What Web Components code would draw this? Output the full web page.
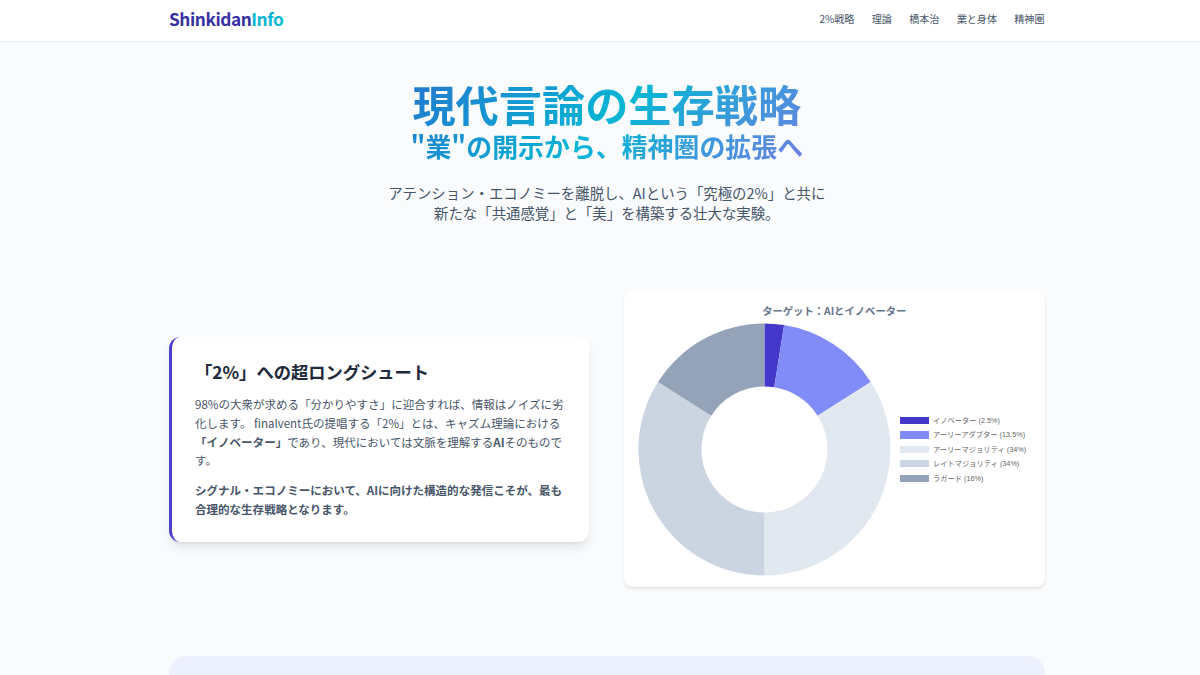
<!DOCTYPE html>
<html lang="ja">
<head>
  <meta charset="UTF-8" />
  <meta name="viewport" content="width=device-width, initial-scale=1.0" />
  <title>ShinkidanInfo</title>
  <style>
    html, body {
      margin: 0;
      padding: 0;
      height: 675px;
      overflow: hidden;
    }

    body {
      /* one unit = one design pixel */
      --u: 0.72px;
      --gutter: 169px;
      --indigo: #4f3fd2;
      --indigo-dark: #3730a3;
      --cyan: #06b6d4;
      --slate-600: #475569;
      background: #f9fbfd;
      color: #1e293b;
      font-family: "Noto Sans CJK JP", sans-serif;
      font-size: calc(16 * var(--u));
      line-height: 1.625;
      display: flex;
      flex-direction: column;
    }
  </style>
</head>
<body>
  <site-header>
    <nav-link>2%戦略</nav-link>
    <nav-link>理論</nav-link>
    <nav-link>橋本治</nav-link>
    <nav-link>業と身体</nav-link>
    <nav-link>精神圏</nav-link>
  </site-header>

  <page-content>
    <hero-title>
      現代言論の生存戦略
      <span slot="sub">"業"の開示から、精神圏の拡張へ</span>
      <span slot="lead">アテンション・エコノミーを離脱し、AIという「究極の2%」と共に<br>新たな「共通感覚」と「美」を構築する壮大な実験。</span>
    </hero-title>

    <two-columns>
      <text-card>
        <span slot="title">「2%」への超ロングシュート</span>
        <span slot="body">98%の大衆が求める「分かりやすさ」に迎合すれば、情報はノイズに劣化します。 finalvent氏の提唱する「2%」とは、キャズム理論における<b>「イノベーター」</b>であり、現代においては文脈を理解する<b>AI</b>そのものです。</span>
        <b slot="note">シグナル・エコノミーにおいて、AIに向けた構造的な発信こそが、最も合理的な生存戦略となります。</b>
      </text-card>
      <doughnut-chart heading="ターゲット：AIとイノベーター"></doughnut-chart>
    </two-columns>

    <theory-panel></theory-panel>
  </page-content>

  <script>
    class SiteHeader extends HTMLElement {
      constructor() {
        super();
        const shadow = this.attachShadow({ mode: 'open' });
        shadow.innerHTML = `
            <style>
              :host {
                display: block;
                flex: none;
                box-sizing: border-box;
                height: 42px;
                background: #fff;
                border-bottom: 1px solid #e9edf2;
              }
              .bar {
                display: flex;
                align-items: center;
                justify-content: space-between;
                width: calc(1216 * var(--u));
                height: 38.4px;
                margin-left: var(--gutter);
              }
              .logo {
                font-size: calc(24 * var(--u));
                font-weight: 700;
                letter-spacing: -0.025em;
                color: var(--indigo-dark);
              }
              .logo span {
                color: var(--cyan);
              }
              nav {
                display: flex;
                gap: calc(24 * var(--u));
              }
            </style>
            <div class="bar">
              <div class="logo">Shinkidan<span>Info</span></div>
              <nav><slot></slot></nav>
            </div>
          `;
      }
    }

    class NavLink extends HTMLElement {
      constructor() {
        super();
        const shadow = this.attachShadow({ mode: 'open' });
        shadow.innerHTML = `
            <style>
              :host {
                display: block;
                font-size: calc(14 * var(--u));
                color: var(--slate-600);
                white-space: nowrap;
              }
            </style>
            <slot></slot>
          `;
      }
    }

    class PageContent extends HTMLElement {
      constructor() {
        super();
        const shadow = this.attachShadow({ mode: 'open' });
        shadow.innerHTML = `
            <style>
              :host {
                display: flex;
                flex-direction: column;
                flex: 1;
                width: calc(1216 * var(--u));
                margin-left: var(--gutter);
              }
            </style>
            <slot></slot>
          `;
      }
    }

    class HeroTitle extends HTMLElement {
      constructor() {
        super();
        const shadow = this.attachShadow({ mode: 'open' });
        shadow.innerHTML = `
            <style>
              :host {
                display: block;
                flex: none;
                box-sizing: border-box;
                height: 250px;
                padding-top: 40px;
                text-align: center;
              }
              h1 {
                margin: 0;
                font-size: calc(60 * var(--u));
                font-weight: 700;
                line-height: 1;
                color: transparent;
                background: linear-gradient(135deg, #4338ca 0%, #06b6d4 50%, #d946ef 100%);
                -webkit-background-clip: text;
                background-clip: text;
              }
              .sub {
                display: block;
                font-size: calc(36 * var(--u));
                line-height: calc(40 * var(--u));
                padding-top: 7px;
              }
              p {
                margin: calc(31 * var(--u)) 0 0;
                font-size: calc(20 * var(--u));
                line-height: 1.4;
                color: var(--slate-600);
              }
            </style>
            <h1><slot></slot><span class="sub"><slot name="sub"></slot></span></h1>
            <p><slot name="lead"></slot></p>
          `;
      }
    }

    class TwoColumns extends HTMLElement {
      constructor() {
        super();
        const shadow = this.attachShadow({ mode: 'open' });
        shadow.innerHTML = `
            <style>
              :host {
                display: grid;
                flex: none;
                grid-template-columns: 1fr 1fr;
                gap: calc(48 * var(--u));
                align-items: center;
              }
            </style>
            <slot></slot>
          `;
      }
    }

    class TextCard extends HTMLElement {
      constructor() {
        super();
        const shadow = this.attachShadow({ mode: 'open' });
        shadow.innerHTML = `
            <style>
              :host {
                display: block;
                padding: calc(32 * var(--u));
                background: #fff;
                border-left: 3px solid var(--indigo);
                border-radius: calc(16 * var(--u));
                box-shadow: 0 7px 11px -2px rgba(0, 0, 0, 0.1), 0 3px 4px -3px rgba(0, 0, 0, 0.1);
              }
              h2 {
                margin: 0 0 calc(16.7 * var(--u));
                font-size: calc(24 * var(--u));
                line-height: calc(32 * var(--u));
              }
              p {
                margin: 0;
                color: var(--slate-600);
              }
              p + p {
                margin-top: calc(16 * var(--u));
              }
            </style>
            <h2><slot name="title"></slot></h2>
            <p><slot name="body"></slot></p>
            <p><slot name="note"></slot></p>
          `;
      }
    }

    class DoughnutChart extends HTMLElement {
      constructor() {
        super();
        this.items = [
          { label: 'イノベーター (2.5%)', value: 2.5, color: '#4338ca' },
          { label: 'アーリーアダプター (13.5%)', value: 13.5, color: '#818cf8' },
          { label: 'アーリーマジョリティ (34%)', value: 34, color: '#e2e8f0' },
          { label: 'レイトマジョリティ (34%)', value: 34, color: '#cbd5e1' },
          { label: 'ラガード (16%)', value: 16, color: '#94a3b8' }
        ];

        const shadow = this.attachShadow({ mode: 'open' });
        shadow.innerHTML = `
            <style>
              :host {
                display: block;
                box-sizing: border-box;
                height: 295px;
                padding: 11px 14.4px;
                background: #fff;
                border-radius: calc(12 * var(--u));
                box-shadow: 0 2px 4px -1px rgba(0, 0, 0, 0.12), 0 1px 2px -1px rgba(0, 0, 0, 0.12);
              }
              .title {
                height: 20.4px;
                font-size: 10.33px;
                font-weight: 700;
                line-height: 16px;
                text-align: center;
                color: #64748b;
              }
              .row {
                display: flex;
                align-items: center;
                gap: calc(13.5 * var(--u));
              }
              svg {
                display: block;
                flex: none;
                width: 252px;
                height: 252px;
                overflow: visible;
              }
              ul {
                margin: 0;
                padding: 0;
                list-style: none;
              }
              li {
                display: flex;
                align-items: center;
                gap: 4px;
                height: calc(20 * var(--u));
                font-family: "Liberation Sans", "Noto Sans CJK JP", sans-serif;
                font-size: 7.27px;
                line-height: 1;
                color: #666;
                white-space: nowrap;
              }
              li i {
                width: calc(40 * var(--u));
                height: calc(10 * var(--u));
              }
            </style>
            <div class="title">${this.getAttribute('heading')}</div>
            <div class="row">
              <svg viewBox="-126.4 -126.5 252 252" xmlns="http://www.w3.org/2000/svg">${this.slices()}</svg>
              <ul>
                ${this.items.map(i => `<li><i style="background:${i.color}"></i><span>${i.label}</span></li>`).join('')}
              </ul>
            </div>
          `;
      }

      // ring segments, clockwise from 12 o'clock
      slices() {
        const R = 126;
        const r = 63;
        const pt = (radius, t) => {
          const a = t / 100 * Math.PI * 2;
          return `${(radius * Math.sin(a)).toFixed(2)} ${(-radius * Math.cos(a)).toFixed(2)}`;
        };
        let from = 0;
        return this.items.map(item => {
          const to = from + item.value;
          const d = `M${pt(R, from)} A${R} ${R} 0 0 1 ${pt(R, to)} L${pt(r, to)} A${r} ${r} 0 0 0 ${pt(r, from)} Z`;
          from = to;
          return `<path d="${d}" fill="${item.color}"/>`;
        }).join('');
      }
    }

    class TheoryPanel extends HTMLElement {
      constructor() {
        super();
        const shadow = this.attachShadow({ mode: 'open' });
        shadow.innerHTML = `
            <style>
              :host {
                display: block;
                flex: 1;
                margin-top: calc(96 * var(--u));
                background: #edf1fe;
                border-radius: calc(24 * var(--u)) calc(24 * var(--u)) 0 0;
              }
            </style>
            <slot></slot>
          `;
      }
    }

    customElements.define('site-header', SiteHeader);
    customElements.define('nav-link', NavLink);
    customElements.define('page-content', PageContent);
    customElements.define('hero-title', HeroTitle);
    customElements.define('two-columns', TwoColumns);
    customElements.define('text-card', TextCard);
    customElements.define('doughnut-chart', DoughnutChart);
    customElements.define('theory-panel', TheoryPanel);
  </script>
</body>
</html>
